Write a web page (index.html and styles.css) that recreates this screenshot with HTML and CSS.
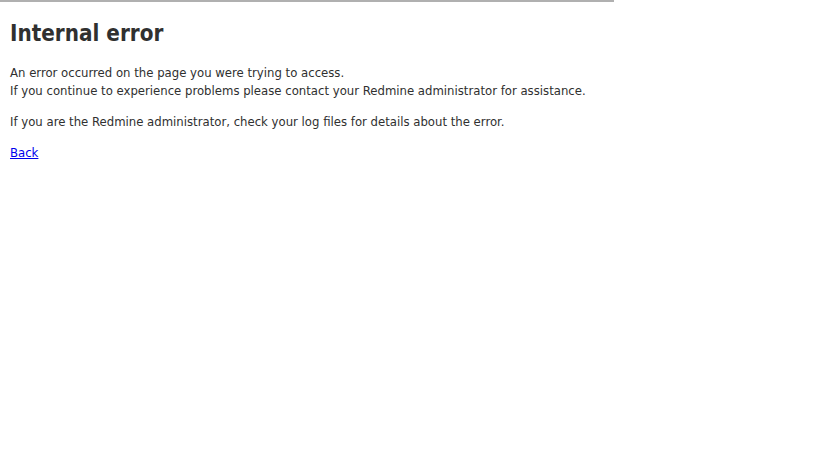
FILE: index.html
```html
<!DOCTYPE html>
<html>
<head>
<meta charset="utf-8">
<title>Internal error</title>
<link rel="stylesheet" href="styles.css">
</head>
<body>
<div class="topline"></div>
<main class="content">
  <h1 class="title">Internal error</h1>
  <p class="msg">An error occurred on the page you were trying to access.<br>If you continue to experience problems please contact your Redmine administrator for assistance.</p>
  <p class="msg">If you are the Redmine administrator, check your log files for details about the error.</p>
  <p class="msg"><a class="back" href="#">Back</a></p>
</main>
</body>
</html>
```
FILE: styles.css
```css
html, body {
  margin: 0;
  padding: 0;
  background: #ffffff;
}
body {
  font-family: "DejaVu Sans Condensed", "DejaVu Sans", sans-serif;
  color: #303030;
}
.topline {
  width: 614px;
  height: 2px;
  background: #b0b0b0;
}
.content {
  padding: 17px 10px 10px;
}
.title {
  font-size: 22.25px;
  line-height: 28px;
  font-weight: bold;
  margin: 0 0 16.5px;
  color: #303030;
}
.msg {
  font-size: 13px;
  line-height: 18px;
  margin: 0 0 13px;
}
.back {
  color: #0000ee;
  text-decoration: underline;
}
```
